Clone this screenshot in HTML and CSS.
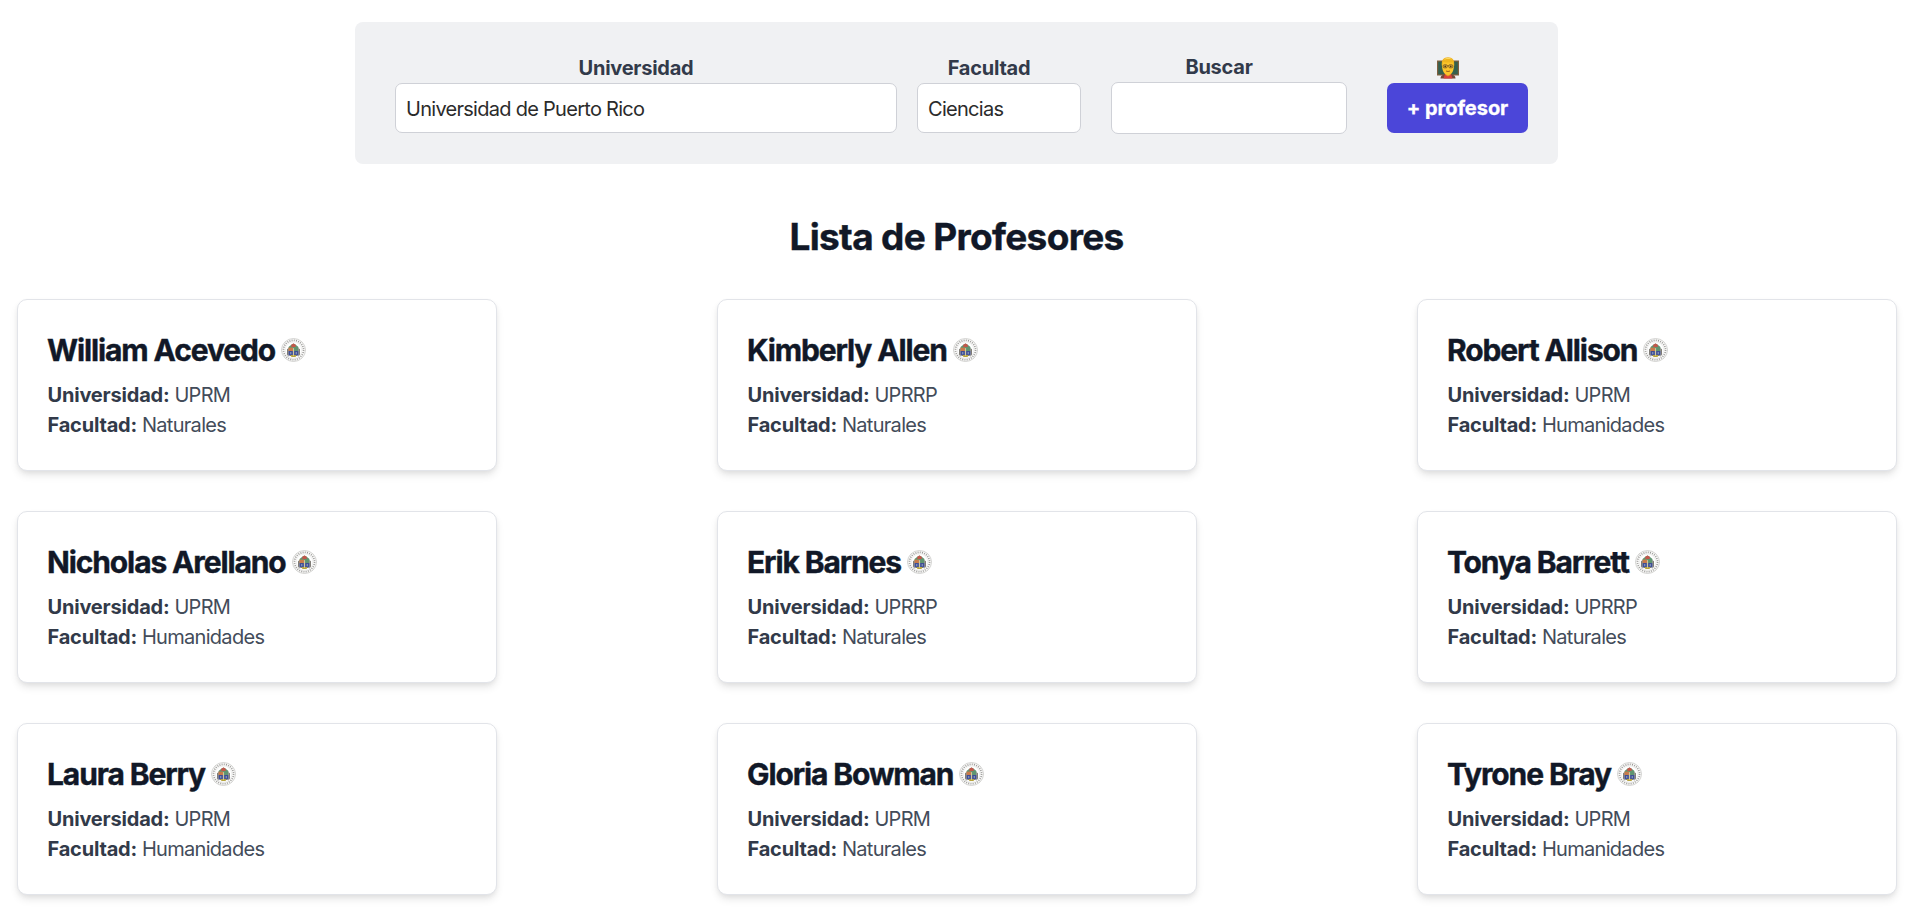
FILE: index.html
```html
<!DOCTYPE html>
<html lang="es">
<head>
<meta charset="utf-8">
<title>Lista de Profesores</title>
<link rel="stylesheet" href="styles.css">
</head>
<body>
<svg class="sprite" aria-hidden="true">
  <symbol id="seal" viewBox="0 0 25 24">
    <ellipse cx="12.5" cy="12" rx="12" ry="11.5" fill="#f8f8f7" stroke="#c4c4c2" stroke-width=".7"/>
    <ellipse cx="12.5" cy="12" rx="10" ry="9.6" fill="none" stroke="#989795" stroke-width="1.7" stroke-dasharray=".9 1.3"/>
    <ellipse cx="12.5" cy="12" rx="8.300" ry="8" fill="#fff" stroke="#dededc" stroke-width=".4"/>
    <g transform="translate(-1.25 -.3) scale(1.1)">
      <path d="M8 8.500l2.500-2 2-1.200 2 1.200 2.500 2V12H8z" fill="#5f9470"/>
      <path d="M10.500 6.500l2-1.200 2 1.200v2h-4z" fill="#c3564a"/>
      <path d="M6.600 10.500l1.500-1.200v8l-1.500-2zM18.400 10.500l-1.500-1.200v8l1.500-2z" fill="#7f7c76"/>
      <path d="M8 9h4.300v3.200H8z" fill="#c97b4a"/>
      <path d="M8 12h4v4.700H9.300L8 15.500zM13 12h4v3.500l-1.300 1.200H13z" fill="#3f4e94"/>
      <path d="M9.300 15.800h6.400l-1.500 1.700h-3.400z" fill="#b8a43c"/>
      <path d="M12 9.500h1v7h-1z" fill="#cfc79f"/>
      <path d="M9.500 13h1v2h-1zM14.500 13h1v2h-1z" fill="#8d9fc0"/>
    </g>
  </symbol>
</svg>

<form class="filters">
  <div class="field field-university">
    <label class="label" for="university">Universidad</label>
    <div class="control" id="university">Universidad de Puerto Rico</div>
  </div>
  <div class="field field-faculty">
    <label class="label" for="faculty">Facultad</label>
    <div class="control" id="faculty">Ciencias</div>
  </div>
  <div class="field field-search">
    <label class="label" for="search">Buscar</label>
    <input class="control control-search" id="search" type="text">
  </div>
  <div class="field field-add">
    <span class="label label-icon">
      <svg class="teacher" viewBox="0 0 22 22">
        <path d="M0 3.500h22v15H0z" fill="#80603f"/>
        <path d="M1.200 4.700h19.600v12.600H1.200z" fill="#34604f"/>
        <path d="M3.500 21.500c0-3 2.500-4.500 7.500-4.500s7.500 1.500 7.500 4.500z" fill="#744837"/>
        <path d="M8 17h6l1.500 4.500h-9z" fill="#d9403c"/>
        <path d="M8.700 15h4.600v3L11 19.500 8.700 18z" fill="#e5a11d"/>
        <path d="M5 8C5 3 7.500 1.500 11 1.500S17 3 17 8c0 6-2.300 10-6 10S5 14 5 8z" fill="#fbc42b"/>
        <path d="M4.800 9C4.300 3 6.500.3 11 .3c4.600 0 6.700 2.700 6.200 8.700-.7-1.300-.7-3-1.500-3.800-2.300.5-6.500.4-9.200-.3C5.500 6.200 5.400 7.700 4.800 9z" fill="#efb51f"/>
        <path d="M7 2.500C9 1 13 .8 15 2.500c-2-.6-5-.5-8 0z" fill="#ffe57a"/>
        <rect x="6.200" y="7.800" width="4" height="3" rx="1" fill="#e2b340" stroke="#76561e" stroke-width=".8"/>
        <rect x="11.800" y="7.800" width="4" height="3" rx="1" fill="#e2b340" stroke="#76561e" stroke-width=".8"/>
        <path d="M10.200 8.700h1.600" stroke="#76561e" stroke-width=".7"/>
        <circle cx="8.200" cy="9.400" r=".8" fill="#49310f"/>
        <circle cx="13.800" cy="9.400" r=".8" fill="#49310f"/>
        <path d="M9 14q2 1 4 0" fill="none" stroke="#9b611a" stroke-width="1"/>
      </svg>
    </span>
    <button class="add-button" type="button">+ profesor</button>
  </div>
</form>

<h1 class="title">Lista de Profesores</h1>

<main class="professors">
  <article class="card">
    <h2 class="name">William Acevedo <svg class="seal"><use href="#seal"/></svg></h2>
    <p class="detail"><strong>Universidad:</strong> <span>UPRM</span></p>
    <p class="detail"><strong>Facultad:</strong> <span>Naturales</span></p>
  </article>
  <article class="card">
    <h2 class="name">Kimberly Allen <svg class="seal"><use href="#seal"/></svg></h2>
    <p class="detail"><strong>Universidad:</strong> <span>UPRRP</span></p>
    <p class="detail"><strong>Facultad:</strong> <span>Naturales</span></p>
  </article>
  <article class="card">
    <h2 class="name">Robert Allison <svg class="seal"><use href="#seal"/></svg></h2>
    <p class="detail"><strong>Universidad:</strong> <span>UPRM</span></p>
    <p class="detail"><strong>Facultad:</strong> <span>Humanidades</span></p>
  </article>
  <article class="card">
    <h2 class="name">Nicholas Arellano <svg class="seal"><use href="#seal"/></svg></h2>
    <p class="detail"><strong>Universidad:</strong> <span>UPRM</span></p>
    <p class="detail"><strong>Facultad:</strong> <span>Humanidades</span></p>
  </article>
  <article class="card">
    <h2 class="name">Erik Barnes <svg class="seal"><use href="#seal"/></svg></h2>
    <p class="detail"><strong>Universidad:</strong> <span>UPRRP</span></p>
    <p class="detail"><strong>Facultad:</strong> <span>Naturales</span></p>
  </article>
  <article class="card">
    <h2 class="name">Tonya Barrett <svg class="seal"><use href="#seal"/></svg></h2>
    <p class="detail"><strong>Universidad:</strong> <span>UPRRP</span></p>
    <p class="detail"><strong>Facultad:</strong> <span>Naturales</span></p>
  </article>
  <article class="card">
    <h2 class="name">Laura Berry <svg class="seal"><use href="#seal"/></svg></h2>
    <p class="detail"><strong>Universidad:</strong> <span>UPRM</span></p>
    <p class="detail"><strong>Facultad:</strong> <span>Humanidades</span></p>
  </article>
  <article class="card">
    <h2 class="name">Gloria Bowman <svg class="seal"><use href="#seal"/></svg></h2>
    <p class="detail"><strong>Universidad:</strong> <span>UPRM</span></p>
    <p class="detail"><strong>Facultad:</strong> <span>Naturales</span></p>
  </article>
  <article class="card">
    <h2 class="name">Tyrone Bray <svg class="seal"><use href="#seal"/></svg></h2>
    <p class="detail"><strong>Universidad:</strong> <span>UPRM</span></p>
    <p class="detail"><strong>Facultad:</strong> <span>Humanidades</span></p>
  </article>
</main>
</body>
</html>
```
FILE: styles.css
```css
* {
  box-sizing: border-box;
}

body {
  margin: 0;
  padding-top: 22px;
  background: #fff;
  color: #374151;
  font-family: Inter, "Liberation Sans", sans-serif;
  font-size: 20px;
  line-height: 30px;
}

.sprite {
  display: none;
}

.filters {
  display: flex;
  align-items: center;
  width: 1203px;
  height: 142px;
  margin: 0 0 0 355px;
  padding: 0 30px 0 40px;
  border-radius: 8px;
  background: #f0f1f3;
}

.field {
  display: flex;
  flex-direction: column;
}

.field-university {
  width: 502px;
  margin-right: 20px;
}

.field-faculty {
  width: 164px;
  margin-right: 30px;
}

.field-search {
  width: 236px;
  margin-right: 40px;
}

.field-add {
  width: 141px;
}

.label {
  height: 30px;
  padding-right: 20px;
  color: #323a4a;
  font-size: 20px;
  font-weight: 700;
  letter-spacing: -0.25px;
  text-align: center;
}

.label-icon {
  display: flex;
  align-items: center;
  justify-content: center;
}

.teacher {
  width: 22px;
  height: 22px;
}

.control {
  width: 100%;
  height: 50px;
  padding: 10px 10px 8px;
  border: 1px solid #cfd1d7;
  border-radius: 7px;
  background: #fff;
  color: #2b2b2b;
  font-family: inherit;
  font-size: 20px;
  letter-spacing: -0.72px;
}

.control-search {
  height: 52px;
}

.add-button {
  height: 50px;
  padding: 0;
  border: 0;
  border-radius: 7px;
  background: #4b46d9;
  color: #fff;
  font-family: inherit;
  font-size: 20px;
  font-weight: 700;
  letter-spacing: -0.05px;
  -webkit-text-stroke: 0.3px;
}

.title {
  margin: 51px 0 0;
  padding-left: 2px;
  color: #111827;
  font-size: 37px;
  font-weight: 700;
  line-height: 44px;
  letter-spacing: -0.67px;
  text-align: center;
  -webkit-text-stroke: 0.4px;
}

.professors {
  display: grid;
  grid-template-columns: repeat(3, 480px);
  gap: 40px 220px;
  padding: 40px 0 13px 17px;
}

.card {
  height: 172px;
  padding: 30px 29px 0;
  border: 1px solid #e2e4e9;
  border-radius: 10px;
  background: #fff;
  box-shadow: 0 5px 8px -1px rgba(0, 0, 0, 0.1), 0 2px 5px -1px rgba(0, 0, 0, 0.06);
}

.name {
  display: flex;
  align-items: center;
  gap: 6px;
  height: 40px;
  margin: 0 0 10px;
  color: #111827;
  font-size: 30px;
  font-weight: 700;
  letter-spacing: -1.12px;
  white-space: nowrap;
  -webkit-text-stroke: 0.4px;
}

.seal {
  width: 25px;
  height: 24px;
  -webkit-text-stroke: 0;
}

.detail {
  margin: 0;
  padding-left: 0.5px;
  color: #434c5a;
  letter-spacing: -0.7px;
}

.detail strong {
  color: #323a49;
  font-weight: 700;
  letter-spacing: -0.2px;
}
```
